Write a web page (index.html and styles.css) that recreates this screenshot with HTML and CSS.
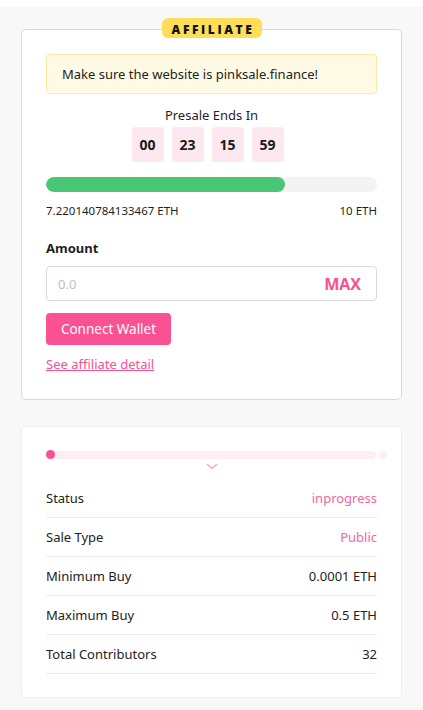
FILE: index.html
```html
<!DOCTYPE html>
<html>
<head>
<meta charset="utf-8">
<link rel="stylesheet" href="styles.css">
</head>
<body>
<div class="page">
  <div class="card affiliate">
    <div class="badge">AFFILIATE</div>
    <div class="alert">Make sure the website is pinksale.finance!</div>
    <div class="ends">Presale Ends In</div>
    <div class="countdown">
      <span class="cd">00</span><span class="cd">23</span><span class="cd">15</span><span class="cd">59</span>
    </div>
    <div class="progress"><div class="fill" style="width:72.2%"></div></div>
    <div class="prog-labels"><span>7.220140784133467 ETH</span><span>10 ETH</span></div>
    <div class="amount-label">Amount</div>
    <div class="input"><span class="ph">0.0</span><span class="max">MAX</span></div>
    <button class="btn">Connect Wallet</button>
    <a class="link" href="#">See affiliate detail</a>
  </div>

  <div class="card info">
    <div class="steps">
      <span class="dot on"></span>
      <span class="track"></span>
      <span class="dot off"></span>
    </div>
    <div class="chev"><svg width="12" height="7" viewBox="0 0 12 7"><path d="M1 1 L6 5.5 L11 1" fill="none" stroke="#f7a1c0" stroke-width="1.3"/></svg></div>
    <div class="rows">
      <div class="row"><span>Status</span><span class="pink">inprogress</span></div>
      <div class="row"><span>Sale Type</span><span class="pink">Public</span></div>
      <div class="row"><span>Minimum Buy</span><span>0.0001 ETH</span></div>
      <div class="row"><span>Maximum Buy</span><span>0.5 ETH</span></div>
      <div class="row"><span>Total Contributors</span><span>32</span></div>
    </div>
  </div>
</div>
</body>
</html>
```

FILE: styles.css
```css
* { box-sizing: border-box; }
html, body { margin: 0; padding: 0; background: #fff; }
body {
  font-family: "Noto Sans", "Open Sans", sans-serif;
  color: #1f1f1f;
  font-size: 13px;
}
.page {
  margin-top: 7px;
  background: #f8f8f8;
  padding: 22px 21px 20px 21px;
  min-height: 703px;
}
.card {
  background: #fff;
  border-radius: 5px;
  position: relative;
}
.affiliate {
  border: 1px solid #fcdc72;
  padding: 24px 24px 26px 24px;
  display: flex;
  flex-direction: column;
}
.badge {
  position: absolute;
  top: -12px;
  left: 50%;
  transform: translateX(-50%);
  width: 100px;
  height: 20px;
  background: #fedd59;
  border-radius: 6px;
  font-family: "Open Sans", sans-serif;
  font-weight: 800;
  font-size: 12px;
  letter-spacing: 2.6px;
  text-align: center;
  line-height: 24px;
  color: #111;
  padding-left: 3px;
}
.alert {
  background: #fffae6;
  border: 1px solid #fde9a2;
  border-radius: 4px;
  height: 40px;
  display: flex;
  align-items: center;
  padding-left: 15px;
  font-size: 13px;
  color: #222;
}
.ends {
  text-align: center;
  margin-top: 11px;
  line-height: 20px;
  font-size: 13px;
}
.countdown {
  display: flex;
  justify-content: center;
  margin-top: 2px;
}
.cd {
  width: 32px;
  height: 35px;
  margin-right: 8px;
  background: #fde8ef;
  border-radius: 3px;
  display: flex;
  align-items: center;
  justify-content: center;
  font-weight: 700;
  font-size: 14px;
  color: #1a1a1a;
}
.progress {
  margin-top: 15px;
  height: 15px;
  background: #f3f3f3;
  border-radius: 8px;
  overflow: hidden;
}
.fill {
  height: 100%;
  background: #48c774;
  border-radius: 8px;
}
.prog-labels {
  display: flex;
  justify-content: space-between;
  font-size: 11.5px;
  margin-top: 10px;
  line-height: 18px;
}
.amount-label {
  font-weight: 700;
  font-size: 13px;
  margin-top: 19px;
  line-height: 18px;
}
.input {
  margin-top: 9px;
  height: 35px;
  border: 1px solid #d9d9d9;
  border-radius: 4px;
  display: flex;
  align-items: center;
  justify-content: space-between;
  padding: 0 15px 0 11px;
}
.ph { color: #bfbfbf; font-size: 13px; }
.max { color: #f95192; font-weight: 700; font-size: 16px; font-family: "Open Sans", sans-serif; }
.btn {
  align-self: flex-start;
  margin-top: 12px;
  height: 32px;
  width: 125px;
  border: 0;
  border-radius: 4px;
  background: #f95192;
  color: #fff;
  font-family: inherit;
  font-size: 13.5px;
  padding: 0;
}
.link {
  align-self: flex-start;
  margin-top: 10px;
  color: #f95192;
  font-size: 13px;
  line-height: 18px;
  text-decoration: underline;
}
.info {
  margin-top: 26px;
  border: 1px solid #efefef;
  padding: 23px 24px 23px 24px;
}
.steps {
  display: flex;
  align-items: center;
  height: 9px;
  margin-top: 0;
  position: relative;
}
.track {
  flex: 1;
  height: 8px;
  background: #fdeef3;
  border-radius: 4px;
  margin-left: -9px;
}
.dot {
  width: 9px;
  height: 9px;
  border-radius: 50%;
  flex: none;
  position: relative;
  z-index: 1;
}
.dot.on { background: #f95192; }
.dot.off { background: #fdeef3; margin-right: -10px; margin-left: 3px; width: 8px; height: 8px; }
.chev {
  display: flex;
  justify-content: center;
  margin-top: 4px;
  height: 8px;
}
.rows { margin-top: 8px; }
.row {
  display: flex;
  justify-content: space-between;
  align-items: center;
  height: 39px;
  border-bottom: 1px solid #ececec;
  font-size: 13px;
  color: #222;
}
.pink { color: #f5659e; }
```
